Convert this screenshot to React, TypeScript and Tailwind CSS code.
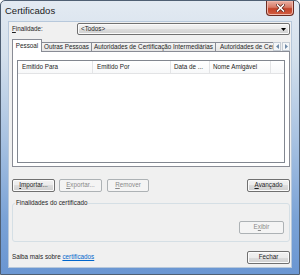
import React from "react";

const btn =
  "h-[13px] flex items-center justify-center rounded-[2px] border border-[#707070] bg-[linear-gradient(#f2f2f2,#ebebeb_50%,#dddddd_50%,#cfcfcf)] shadow-[inset_0_0_0_1px_#fbfbfb] text-[#1e1e1e]";
const btnOff =
  "h-[13px] flex items-center justify-center rounded-[2px] border border-[#adb2b5] bg-[#f4f4f4] text-[#8a8a8a]";

function Button({ label, u, rest, w, off, def }: { label?: string; u: string; rest: string; w: string; off?: boolean; def?: boolean }) {
  return (
    <div
      className={`${off ? btnOff : btn} ${w} ${def ? "border-[#3c7fb1] shadow-[inset_0_0_0_1px_#b5dcf4]" : ""}`}
    >
      {label}
      <span className="underline">{u}</span>
      {rest}
    </div>
  );
}

function Tab({ text, w, active }: { text: string; w: string; active?: boolean }) {
  if (active) {
    return (
      <div className={`${w} h-[13px] relative z-10 flex items-center justify-center border border-b-0 border-[#898c95] bg-white`}>
        {text}
      </div>
    );
  }
  return (
    <div
      className={`${w} h-[9px] mb-[1px] -ml-px flex items-center justify-center overflow-hidden whitespace-nowrap border border-b-0 border-[#898c95] bg-[linear-gradient(#f4f4f4,#e6e6e6)]`}
    >
      {text}
    </div>
  );
}

export default function App() {
  return (
    <div className="w-[300px] h-[275px] flex flex-col overflow-hidden rounded-t-[5px] border border-[#4f5f73] bg-[linear-gradient(#e3eaf2_0%,#d4e0ec_20%,#a9c3e2_50%,#7aa2d6_80%,#6a96d2_100%)] font-[family-name:'Liberation_Sans',Arial,sans-serif] text-[6.3px] leading-none text-[#1e1e1e]">
      {/* title bar */}
      <div className="h-[20px] flex items-start justify-between">
        <div className="pl-[4px] pt-[5px] text-[9.5px] text-[#1b1b1b]">Certificados</div>
        <div className="mr-[5px] w-[28px] h-[15px] flex items-center justify-center rounded-b-[4px] border border-t-0 border-[#6b2c22] bg-[linear-gradient(#eab0a4,#d77a66_45%,#c2432a_55%,#d25d41)] shadow-[inset_0_0_0_1px_#f0b8ab]">
          <svg width="9" height="8" viewBox="0 0 9 8">
            <path d="M1.5 1 L7.5 7 M7.5 1 L1.5 7" stroke="#5a2018" strokeWidth="3" strokeLinecap="square" />
            <path d="M1.5 1 L7.5 7 M7.5 1 L1.5 7" stroke="#ffffff" strokeWidth="1.6" strokeLinecap="square" />
          </svg>
        </div>
      </div>

      {/* client area */}
      <div className="flex-1 mx-[7px] mb-[6px] border border-[#b7c8db] bg-[#f0f0f0] pl-[3px] pr-[1px] pt-[1px] flex flex-col">
        <div className="h-[12px] flex items-center">
          <div className="w-[65px]">
            <span className="underline">F</span>inalidade:
          </div>
          <div className="flex-1 h-[12px] flex items-center justify-between rounded-[2px] border border-[#707070] bg-[linear-gradient(#f2f2f2,#ebebeb_50%,#dddddd_50%,#cfcfcf)] shadow-[inset_0_0_0_1px_#fbfbfb] pl-[3px] pr-[3px]">
            <span>&lt;Todos&gt;</span>
            <svg width="5" height="3" viewBox="0 0 5 3">
              <path d="M0 0 H5 L2.5 3 Z" fill="#000" />
            </svg>
          </div>
        </div>

        {/* tabs */}
        <div className="mt-[4px] h-[13px] -mb-px relative z-10 flex items-end">
          <Tab text="Pessoal" w="w-[30px]" active />
          <Tab text="Outras Pessoas" w="w-[51px]" />
          <Tab text="Autoridades de Certificação Intermediárias" w="w-[125px]" />
          <div className="w-[58px] h-[9px] mb-[1px] -ml-px overflow-hidden whitespace-nowrap border border-b-0 border-r-0 border-[#898c95] bg-[linear-gradient(#f4f4f4,#e6e6e6)] pl-[4px] flex items-center">
            Autoridades de Certificação Raiz Confiáveis
          </div>
          <div className="ml-auto mb-[1px] flex gap-[1px]">
            <div className="w-[8px] h-[9px] flex items-center justify-center border border-[#c5ccd4] bg-[#f4f6f8]">
              <svg width="3" height="5" viewBox="0 0 3 5">
                <path d="M3 0 V5 L0 2.5 Z" fill="#6f8aa8" />
              </svg>
            </div>
            <div className="w-[8px] h-[9px] flex items-center justify-center border border-[#c5ccd4] bg-[#f4f6f8]">
              <svg width="3" height="5" viewBox="0 0 3 5">
                <path d="M0 0 V5 L3 2.5 Z" fill="#6f8aa8" />
              </svg>
            </div>
          </div>
        </div>

        {/* tab panel */}
        <div className="h-[116px] border border-[#898c95] bg-white pt-[8px] px-[4px]">
          <div className="h-[103px] border border-[#828790] bg-white">
            <div className="h-[13px] flex border-b border-[#e2e3e5] bg-[linear-gradient(#ffffff,#f7f8f9)]">
              <div className="w-[75px] border-r border-[#e3e4e6] pl-[4px] flex items-center">Emitido Para</div>
              <div className="w-[78px] border-r border-[#e3e4e6] pl-[4px] flex items-center">Emitido Por</div>
              <div className="w-[39px] border-r border-[#e3e4e6] pl-[3px] flex items-center">Data de ...</div>
              <div className="w-[61px] border-r border-[#e3e4e6] pl-[3px] flex items-center">Nome Amigável</div>
              <div className="flex-1" />
            </div>
          </div>
        </div>

        {/* buttons */}
        <div className="mt-[12px] flex">
          <Button u="I" rest="mportar..." w="w-[43px]" />
          <div className="ml-[4px]">
            <Button u="E" rest="xportar..." w="w-[43px]" off />
          </div>
          <div className="ml-[5px]">
            <Button u="R" rest="emover" w="w-[42px]" off />
          </div>
          <div className="ml-auto">
            <Button u="A" rest="vançado" w="w-[43px]" />
          </div>
        </div>

        {/* group box */}
        <div className="mt-[11px] h-[39px] relative rounded-[3px] border border-[#d5dfe5] flex justify-end pt-[17px] pr-[5px]">
          <div className="absolute left-[2px] top-[-4px] bg-[#f0f0f0] px-[1px]">Finalidades do certificado</div>
          <Button label="E" u="x" rest="ibir" w="w-[45px]" off />
        </div>

        {/* footer */}
        <div className="mt-[9px] flex items-center">
          <div>
            Saiba mais sobre <span className="text-[#0066cc] underline">certificados</span>
          </div>
          <div className="ml-auto">
            <Button u="" rest="Fechar" w="w-[43px]" def />
          </div>
        </div>
      </div>
    </div>
  );
}
